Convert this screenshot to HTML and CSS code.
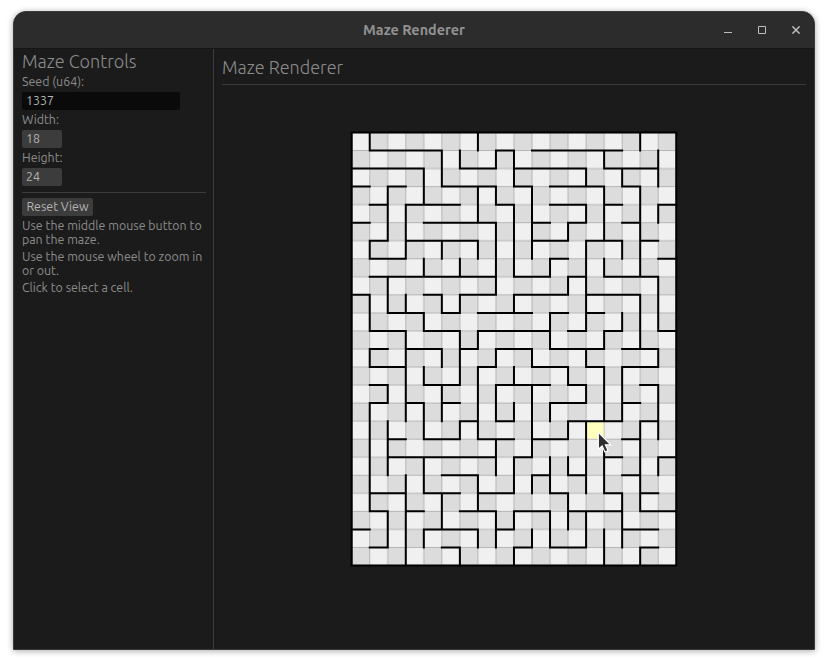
FILE: index.html
```html
<!DOCTYPE html>
<html lang="en">
<head>
<meta charset="utf-8">
<title>Maze Renderer</title>
<link rel="stylesheet" href="styles.css">
</head>
<body>
<div class="window">
  <header class="titlebar">
    <span class="title">Maze Renderer</span>
    <div class="buttons">
      <svg width="8" height="8" viewBox="0 0 8 8"><path d="M0 6.5H8"/></svg>
      <svg width="8" height="8" viewBox="0 0 8 8"><path d="M.5 .5H7.5V7.5H.5Z"/></svg>
      <svg class="close" width="8" height="8" viewBox="0 0 8 8"><path d="M.4 .4L7.6 7.6M7.6 .4L.4 7.6"/></svg>
    </div>
  </header>
  <div class="content">
    <aside class="controls">
      <h2 class="heading">Maze Controls</h2>
      <label class="label seed">Seed (u64):</label>
      <div class="field wide">1337</div>
      <label class="label">Width:</label>
      <div class="field">18</div>
      <label class="label">Height:</label>
      <div class="field">24</div>
      <hr class="rule">
      <button class="reset">Reset View</button>
      <p class="hint">Use the middle mouse button to<br>pan the maze.</p>
      <p class="hint">Use the mouse wheel to zoom in<br>or out.</p>
      <p class="hint">Click to select a cell.</p>
    </aside>
    <main class="view">
      <h1 class="heading">Maze Renderer</h1>
      <hr class="rule">
      <svg class="maze" width="328" height="436" viewBox="0 0 328 436">
        <defs>
          <pattern id="cells" width="2" height="2" patternUnits="userSpaceOnUse">
            <rect width="2" height="2" fill="#f0f0f0"/>
            <path d="M1 0H2V1H1ZM0 1H1V2H0Z" fill="#dcdcdc"/>
            <path d="M0 0H2M0 1H2M0 2H2M0 0V2M1 0V2M2 0V2" stroke="#b0b0b0" stroke-width=".05" fill="none"/>
          </pattern>
        </defs>
        <g transform="translate(1.7 1.5) scale(18.03 18.04)">
          <rect width="18" height="24" fill="url(#cells)"/>
          <rect x="13.03" y="16.03" width=".94" height=".94" fill="#ffffbe"/>
          <path class="walls" d="M0 0H18V24H0Z
            M1 1H5M8 1H9M10 1H15
            M0 2H4M6 2H8M9 2H13M14 2H17
            M0 3H1M2 3H3M5 3H8M9 3H10M11 3H14M15 3H16
            M1 4H2M3 4H6M8 4H9M11 4H13M14 4H15M17 4H18
            M0 5H1M4 5H8M10 5H11M12 5H13M15 5H16
            M1 6H2M3 6H7M10 6H12M13 6H15M16 6H17
            M1 7H3M11 7H12M17 7H18
            M1 8H8M9 8H11M12 8H13M14 8H17
            M0 9H1M4 9H5M6 9H8M9 9H12M13 9H16
            M2 10H4M5 10H6M7 10H10M11 10H12M13 10H14
            M1 11H3M4 11H6M7 11H11M12 11H13M14 11H15M17 11H18
            M1 12H2M3 12H5M6 12H7M8 12H10M11 12H14M15 12H17
            M1 13H3M7 13H8M10 13H12M13 13H14M15 13H17
            M1 14H2M4 14H6M8 14H11M12 14H13M16 14H17
            M1 15H2M3 15H4M5 15H6M11 15H13M15 15H16
            M6 16H7M8 16H9M12 16H15M16 16H17
            M2 17H3M4 17H6M7 17H9M10 17H12M15 17H16
            M2 18H8M9 18H10M14 18H15M17 18H18
            M5 19H7M10 19H11M12 19H13M15 19H16
            M1 20H3M4 20H6M7 20H9M11 20H12M14 20H15M16 20H17
            M1 21H2M3 21H4M6 21H8M9 21H11M12 21H15M16 21H18
            M0 22H1M4 22H7M8 22H9M15 22H17
            M1 23H2M5 23H6M9 23H10M11 23H13M16 23H17
            M1 0V1M1 6V7M1 9V11M1 12V13M1 15V21
            M2 3V6M2 8V10M2 14V15M2 16V19M2 21V23
            M3 4V7M3 9V10M3 11V16M3 19V24
            M4 2V4M4 7V8M4 10V11M4 13V14M4 15V17M4 18V20M4 22V23
            M5 1V3M5 6V7M5 9V10M5 12V13M5 14V16M5 20V22
            M6 1V2M6 7V8M6 9V10M6 11V14M6 16V17M6 23V24
            M7 0V1M7 3V5M7 6V7M7 11V12M7 13V17M7 19V21M7 22V23
            M8 1V2M8 3V4M8 5V9M8 12V13M8 14V16M8 17V19M8 21V23
            M9 1V3M9 4V8M9 9V10M9 13V14M9 15V16M9 18V20M9 21V22M9 23V24
            M10 3V7M10 12V13M10 14V18M10 19V20M10 22V23
            M11 7V8M11 10V12M11 15V16M11 18V20M11 21V23
            M12 5V6M12 8V9M12 13V14M12 16V17M12 18V19M12 20V22
            M13 2V3M13 4V5M13 6V11M13 12V13M13 14V15M13 16V20M13 21V23
            M14 1V2M14 3V6M14 7V8M14 11V12M14 13V16M14 17V20M14 22V24
            M15 2V3M15 6V7M15 10V11M15 13V16M15 20V23
            M16 0V1M16 3V8M16 9V12M16 16V21M16 23V24
            M17 1V3M17 4V5M17 8V11M17 12V13M17 14V17M17 18V19"/>
        </g>
        <path class="cursor" d="M248.3 301.3V318.3L252.2 315L254.9 321L258 319.6L255.4 313.8H260.8Z"/>
      </svg>
    </main>
  </div>
</div>
</body>
</html>
```

FILE: styles.css
```css
* { box-sizing: border-box; }
body {
  margin: 0;
  padding: 11px 13px 16px;
  height: 666px;
  background: #fff;
  font-family: Ubuntu, "Noto Sans", sans-serif;
  font-size: 12.4px;
  color: #8c8c8c;
  overflow: hidden;
}
.window {
  width: 802px;
  height: 639px;
  border: 1px solid #3a3a3a;
  border-radius: 13px 13px 0 0;
  background: #1b1b1b;
  box-shadow: 0 1px 6px rgba(0, 0, 0, .35);
  display: flex;
  flex-direction: column;
  overflow: hidden;
}
.titlebar {
  height: 37px;
  flex: none;
  background: #2c2c2c;
  border-bottom: 1px solid #161616;
  display: grid;
  grid-template-columns: 1fr auto 1fr;
  align-items: center;
}
.title {
  grid-column: 2;
  font-size: 14.4px;
  font-weight: 600;
  color: #929292;
  white-space: nowrap;
}
.buttons {
  justify-self: end;
  display: flex;
  gap: 26px;
  padding-right: 14px;
}
.buttons svg { fill: none; stroke: #bdbdbd; stroke-width: 1; display: block; }
.buttons .close { stroke-width: 1.5; }
.content { flex: 1; display: flex; }
.controls {
  width: 200px;
  padding: 2px 7px 0 8px;
  border-right: 1px solid #3c3c3c;
  display: flex;
  flex-direction: column;
  align-items: flex-start;
}
.heading {
  margin: 0;
  height: 22px;
  font-size: 18px;
  font-weight: 300;
  line-height: 20px;
  white-space: nowrap;
}
.label { height: 14px; line-height: 12px; margin: 3px 0; }
.label.seed { margin-top: 2px; }
.field, .reset {
  height: 18px;
  line-height: 16px;
  padding: 0 4px;
  border: 0;
  border-radius: 2px;
  background: #3c3c3c;
  color: #b4b4b4;
  font-family: inherit;
  font-size: 12.4px;
}
.field { width: 40px; }
.field.wide { width: 158px; background: #0a0a0a; }
.rule { width: 100%; height: 1px; border: 0; margin: 6px 0 5px; background: #3c3c3c; }
.view .rule { margin-top: 5px; }
.reset { width: 71px; padding: 0 4px 2px; white-space: nowrap; margin-bottom: 2px; }
.hint { margin: 0 0 3px; line-height: 14px; white-space: nowrap; }
.view {
  flex: 1;
  padding: 8px 8px 0;
  display: flex;
  flex-direction: column;
}
.maze { display: block; margin: 41px 0 0 128px; }
.walls {
  fill: none;
  stroke: #000;
  stroke-width: 2;
  stroke-linecap: square;
  vector-effect: non-scaling-stroke;
}
.cursor { fill: #2e2e2e; stroke: #fff; stroke-width: 1.2; }
```
